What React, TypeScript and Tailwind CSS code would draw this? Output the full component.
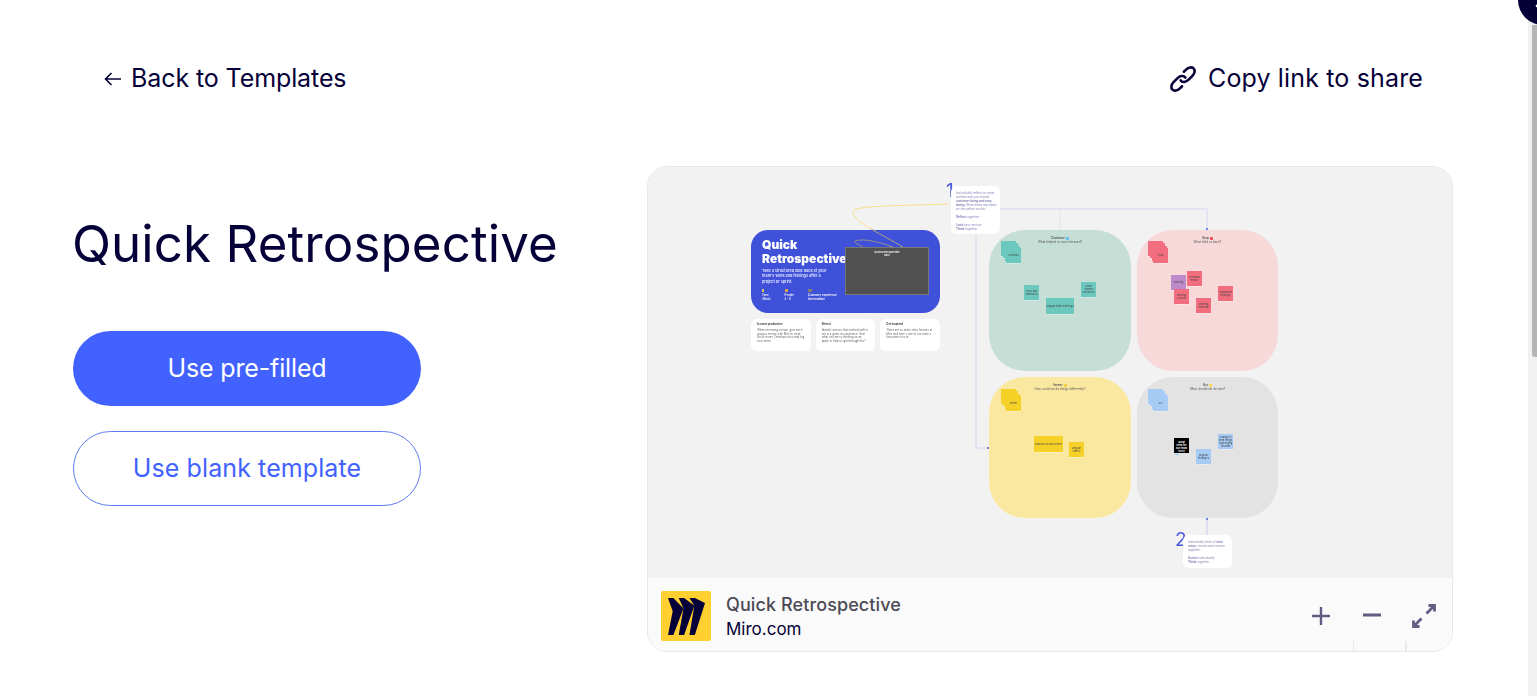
import { X } from 'lucide-react'

const INK = '#050038'

function Sticky({ x, y, w = 15, h = 15, color, text }: { x: number; y: number; w?: number; h?: number; color: string; text?: string }) {
  return (
    <div
      className="absolute flex items-center justify-center overflow-hidden text-center text-[2.5px] leading-[3px] text-[#444] shadow-[0_1px_0_rgba(255,255,255,0.3)]"
      style={{ left: x, top: y, width: w, height: h, backgroundColor: color }}
    >
      {text}
    </div>
  )
}

function Stack({ x, y, color, text }: { x: number; y: number; color: string; text: string }) {
  return (
    <>
      <Sticky x={x} y={y} color={color} />
      <Sticky x={x + 2} y={y + 2} color={color} />
      <Sticky x={x + 4} y={y + 5} color={color} />
      <Sticky x={x + 5} y={y + 7} color={color} text={text} />
    </>
  )
}

function Zone({ color, title, mark, sub, children }: { color: string; title: string; mark: string; sub: string; children: React.ReactNode }) {
  return (
    <div className="relative rounded-[36px] pt-[6px] text-center text-[#555]" style={{ backgroundColor: color }}>
      <p className="flex items-center justify-center gap-[1px] text-[3px] font-bold leading-[4px]">
        {title}
        <span className="inline-block h-[3px] w-[3px] rounded-[1px]" style={{ backgroundColor: mark }} />
      </p>
      <p className="text-[3px] leading-[4px]">{sub}</p>
      {children}
    </div>
  )
}

function InfoCard({ title, children }: { title: string; children: string }) {
  return (
    <div className="h-[32px] flex-1 rounded-[6px] bg-white px-[6px] pt-[4px] text-[2.8px] leading-[3.8px] text-[#666]">
      <p className="mb-[2px] font-bold text-[#333]">{title}</p>
      <p>{children}</p>
    </div>
  )
}

function IntroCard() {
  return (
    <div className="relative h-[83px] rounded-[17px] bg-[#3f51d9] pl-[11px] pt-[8px] text-white">
      <p className="text-[12px] font-black leading-[14px]">Quick<br />Retrospective</p>
      <p className="mt-[2px] w-[72px] text-[3.8px] font-semibold leading-[5.4px] text-[#dfe3ff]">
        Take a structured look back at your team's work and feelings after a project or sprint.
      </p>
      <div className="mt-[5px] flex gap-[14px] text-[2.8px] font-semibold leading-[4px]">
        <div>
          <div className="mb-[1px] h-[3px] w-[2px] bg-[#d9c56a]" />
          Time<br />45min
        </div>
        <div>
          <div className="mb-[1px] h-[3px] w-[3px] bg-[#d9a24a]" />
          People<br />3 - 8
        </div>
        <div>
          <div className="mb-[1px] h-[3px] w-[4px] bg-[#7d7f66]" />
          Customer experience<br />Intermediate
        </div>
      </div>
      <div className="absolute left-[94px] top-[17px] h-[48px] w-[84px] border border-[#777] bg-[#505050] pt-[3px] text-center text-[2.6px] font-semibold leading-[3px] text-white">
        Quick Retrospective
        <br />
        Miro
      </div>
    </div>
  )
}

function Board() {
  return (
    <div className="h-[411px] overflow-hidden bg-[#f2f2f2]">
      <div className="relative h-[411px] blur-[0.4px]">
        <div className="flex gap-[49px] pl-[103px] pt-[63px]">
          <div className="flex w-[189px] flex-col gap-[6px]">
            <IntroCard />
            <div className="flex gap-[5px]">
              <InfoCard title="In more productive">When reviewing a team, give each group a review with Miro to write sticky notes. Develops trust and log your notes.</InfoCard>
              <InfoCard title="Retro it">Identify actions that worked well or not in a great circumstance. And what you are to thinking on an apply to help us get through this?</InfoCard>
              <InfoCard title="Get inspired">There are so many retro formats at Miro and here's one of our team's favourites to use.</InfoCard>
            </div>
          </div>

          <div className="grid grid-cols-[142px_141px] grid-rows-[141px_141px] gap-[6px]">
            <Zone color="#c5dfd6" title="Continue" mark="#5bc0f0" sub="What helped us move forward?">
              <Stack x={12} y={11} color="#6cc8bf" text="Continue" />
              <Sticky x={35} y={55} color="#6cc8bf" text="Trust and teamwork" />
              <Sticky x={57} y={68} w={28} h={16} color="#6cc8bf" text="Regular team meetings" />
              <Sticky x={92} y={52} color="#6cc8bf" text="Great shared resources" />
            </Zone>
            <Zone color="#f7d9d9" title="Stop" mark="#f0484e" sub="What held us back?">
              <Stack x={11} y={11} color="#f26d7d" text="Stop" />
              <Sticky x={50} y={41} color="#f26d7d" text="Too many emails" />
              <Sticky x={34} y={45} color="#bd8bc9" text="Working" />
              <Sticky x={37} y={59} color="#f26d7d" text="Missing context" />
              <Sticky x={59} y={68} color="#f26d7d" text="Meeting overload" />
              <Sticky x={81} y={56} color="#f26d7d" text="Unplanned meetings" />
            </Zone>
            <Zone color="#fbe8a0" title="Invent" mark="#f5c842" sub="How could we do things differently?">
              <Stack x={12} y={12} color="#f5d128" text="Invent" />
              <Sticky x={45} y={59} w={29} h={16} color="#f5d128" text="Improve our processes" />
              <Sticky x={80} y={65} color="#f5d128" text="Regular videos" />
            </Zone>
            <Zone color="#e3e3e3" title="Act" mark="#f5d84a" sub="What should we do next?">
              <Stack x={11} y={12} color="#a6ccf5" text="Act" />
              <div className="absolute left-[37px] top-[61px] h-[15px] w-[15px] bg-black px-[1px] pt-[3px] text-[2.5px] font-bold leading-[3px] text-white">
                Great retro for our team to try
                <div className="mt-[1px] h-[1px] w-[4px] bg-[#7fd0f5]" />
              </div>
              <Sticky x={59} y={72} color="#a6ccf5" text="Regular feedback" />
              <Sticky x={81} y={57} color="#a6ccf5" text="Change to keep things challenging forward" />
            </Zone>
          </div>
        </div>

        <svg className="absolute left-0 top-0" width="804" height="411" fill="none">
          <path d="M352 42H559V62" stroke="#dde0f2" strokeWidth="1.5" />
          <path d="M412 42V63" stroke="#e4e4e8" strokeWidth="1" />
          <path d="M328 67V281H340" stroke="#dde0f2" strokeWidth="1.5" />
          <path d="M559 352V368" stroke="#d5d9f2" strokeWidth="1.5" />
          <path d="M300 37C252 39 205 38 205 45C205 50 213 56 223.25 62" stroke="#f8dc8a" strokeWidth="1" />
          <path d="M223.25 62C233.5 68.25 246 74.5 255 80" stroke="#b3a878" strokeWidth="1" />
          <path d="M215 80C210 77 206 76 207 74C215 71 232 75 245 80" stroke="#a9a07a" strokeWidth="0.8" />
          <circle cx="559" cy="62" r="1" fill="#4a5be0" />
          <circle cx="340" cy="281" r="1" fill="#4a5be0" />
          <circle cx="559" cy="352" r="1" fill="#4a5be0" />
        </svg>

        <span className="absolute left-[298px] top-[14px] text-[19px] leading-[20px] text-[#4a5be0]">1</span>
        <div className="absolute left-[303px] top-[19px] h-[48px] w-[49px] rounded-[6px] bg-white pl-[5px] pr-[3px] pt-[5px] text-[3px] leading-[4px] text-[#8880b8]">
          Individually reflect on what worked and you should <b>continue doing and stop doing</b>. Write down any ideas on the yellow sticker.
          <p className="mt-[4px]"><b>Reflect</b> together</p>
          <p className="mt-[4px]"><b>Look</b> your section</p>
          <p><b>Think</b> together</p>
        </div>

        <span className="absolute left-[527px] top-[363px] text-[19px] leading-[20px] text-[#4a5be0]">2</span>
        <div className="absolute left-[535px] top-[368px] h-[33px] w-[49px] rounded-[6px] bg-white pl-[5px] pr-[2px] pt-[5px] text-[3px] leading-[4px] text-[#8880b8]">
          Individually think of <b>next steps</b>, review and commit together.
          <p className="mt-[4px]"><b>Action</b> individually</p>
          <p><b>Think</b> together</p>
        </div>
      </div>
    </div>
  )
}

function BoardFooter() {
  return (
    <div className="relative flex h-[73px] items-start bg-[#fafafa] pl-[13px] pr-[15px] pt-[13px]">
      <div className="flex h-[50px] w-[50px] items-center justify-center rounded-[2px] bg-[#ffd02f]">
        <svg width="37" height="37" viewBox="0 0 24 24" fill={INK}>
          <path d="M17.392 0H13.9L17 4.808 10.444 0H6.949l3.102 6.75L3.494 0H0l3.05 8.656L0 24h3.494L10.05 6.75 6.949 24h3.494L17 5.421 13.9 24h3.492L24 3.235 17.392 0z" />
        </svg>
      </div>
      <div className="ml-[15px] flex-1 pt-[1px]">
        <p className="text-[18px] font-medium leading-[25px] tracking-[0.1px] text-[#4b4a55]">Quick Retrospective</p>
        <p className="text-[17px] leading-[25px] text-[#050038]">Miro.com</p>
      </div>
      <div className="flex h-[50px] items-center gap-[31px] text-[#625c84]">
        <svg width="20" height="20" viewBox="0 0 20 20" fill="none" stroke="currentColor" strokeWidth="2.4">
          <path d="M10 1V19M1 10H19" />
        </svg>
        <svg width="20" height="20" viewBox="0 0 20 20" fill="none" stroke="currentColor" strokeWidth="2.8">
          <path d="M1 9H19" />
        </svg>
        <svg className="-ml-[2px]" width="26" height="26" viewBox="0 0 26 26" fill="none" stroke="currentColor" strokeWidth="2.8">
          <path d="M15.5 10.5L23 3M17.5 2.5H23.5V8.5" />
          <path d="M10.5 15.5L3 23M2.5 17.5V23.5H8.5" />
        </svg>
      </div>
      <div className="absolute bottom-0 left-[705px] h-[10px] w-px bg-[#e8e8e8]" />
      <div className="absolute bottom-0 left-[757px] h-[10px] w-[2px] bg-[#e8e8e8]" />
    </div>
  )
}

export default function App() {
  return (
    <div className="relative flex h-[696px] w-full overflow-hidden bg-white font-['Inter',sans-serif] text-[#050038]">
      <main className="min-w-0 flex-1">
        <header className="flex items-center justify-between pl-[104px] pr-[105px] pt-[63px]">
          <a className="flex h-[32px] items-center gap-[9px] text-[25px] tracking-[-0.1px]">
            <svg width="18" height="14" viewBox="0 0 18 14" fill="none" stroke="currentColor" strokeWidth="1.6">
              <path d="M17 7H1.5M7.5 1L1.5 7L7.5 13" />
            </svg>
            Back to Templates
          </a>
          <a className="flex h-[32px] items-center gap-[10px] text-[25px] tracking-[0.15px]">
            <svg width="30" height="30" viewBox="0 0 24 24" fill="none" stroke="currentColor" strokeLinecap="round" strokeLinejoin="round">
              <g transform="rotate(-45 12 12) translate(0 12) scale(1 0.72) translate(0 -12) rotate(45 12 12)">
                <path vectorEffect="non-scaling-stroke" strokeWidth="2.6" d="M10 13a5 5 0 0 0 7.54.54l3-3a5 5 0 0 0-7.07-7.07l-1.72 1.71" />
                <path vectorEffect="non-scaling-stroke" strokeWidth="2.6" d="M14 11a5 5 0 0 0-7.54-.54l-3 3a5 5 0 0 0 7.07 7.07l1.71-1.71" />
              </g>
            </svg>
            Copy link to share
          </a>
        </header>

        <div className="mt-[71px] flex pl-[73px]">
          <section className="w-[574px] pt-[46px]">
            <h1 className="-ml-px text-[51px] font-normal leading-[64px] tracking-[0.1px]">Quick Retrospective</h1>
            <button className="mt-[55px] block h-[75px] w-[348px] rounded-full bg-[#4262ff] text-[25px] tracking-[-0.15px] text-white">
              Use pre-filled
            </button>
            <button className="mt-[25px] block h-[75px] w-[348px] rounded-full border border-[#5f7cf0] bg-white text-[25px] tracking-[0.1px] text-[#4262ff]">
              Use blank template
            </button>
          </section>
          <section className="h-[486px] w-[806px] overflow-hidden rounded-[20px] border border-[#e8e8e8]">
            <Board />
            <BoardFooter />
          </section>
        </div>
      </main>

      <aside className="flex w-[9px] justify-end bg-[#f1f1f1] pt-[25px]">
        <div className="h-[332px] w-[5px] rounded-bl-[3px] bg-[#b5b5b5]" />
      </aside>

      <div className="absolute right-[-31px] top-[-25px] flex h-[50px] w-[50px] items-center justify-center rounded-full bg-[#050038] text-white">
        <X size={24} strokeWidth={2.5} />
      </div>
    </div>
  )
}
